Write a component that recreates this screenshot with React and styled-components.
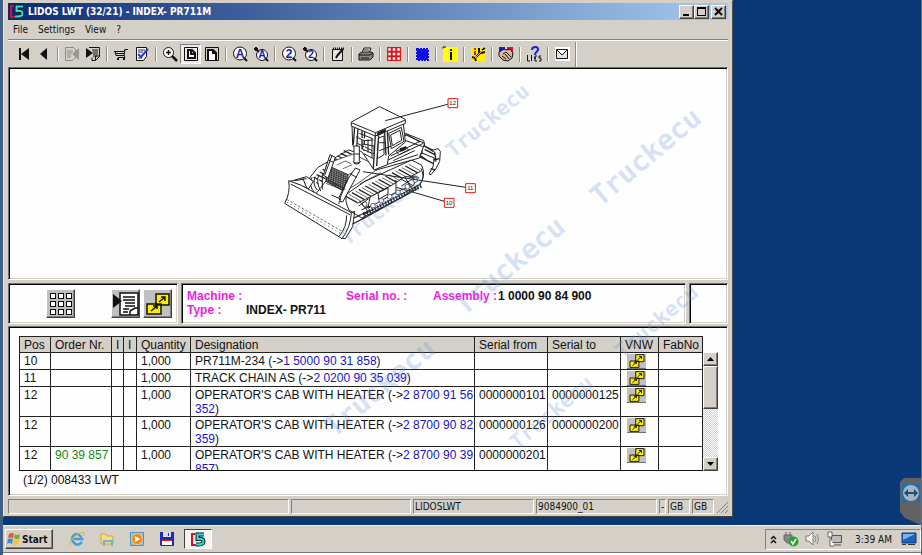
import { Fragment } from "react";
import styled, { createGlobalStyle, css } from "styled-components";

const face = "#d4d0c8";
const navy = "#0a3776";

const GlobalStyle = createGlobalStyle`
  * {
    box-sizing: border-box;
  }
  body {
    margin: 0;
    background: ${navy};
    font-family: "DejaVu Sans Condensed", "DejaVu Sans", sans-serif;
    font-size: 10px;
    color: #111;
  }
  button {
    font: inherit;
    color: inherit;
    padding: 0;
    margin: 0;
    border: 0;
    background: none;
  }
`;

const raised = css`
  border: 1px solid;
  border-color: #fff #404040 #404040 #fff;
  box-shadow: inset -1px -1px #808080;
  background: ${face};
`;

const sunken = css`
  border: 1px solid;
  border-color: #808080 #fff #fff #808080;
`;

const Screen = styled.div`
  position: relative;
  display: flex;
  flex-direction: column;
  min-height: 100vh;
  overflow: hidden;
  border-left: 3px solid #3e5f83;
  border-right: 1px solid #5b6e8a;
`;

const Desktop = styled.div`
  flex: 1;
  display: flex;
  padding: 0 188px 8px 0;
`;

const Window = styled.main`
  position: relative;
  flex: 1;
  min-width: 0;
  display: flex;
  flex-direction: column;
  padding: 2px 4px 2px 4px;
  background: ${face};
  border: 1px solid;
  border-color: ${face} #505050 #404040 #e8e6e0;
`;

const TitleBar = styled.header`
  display: flex;
  align-items: center;
  gap: 3px;
  height: 17px;
  padding: 0 2px 0 1px;
  background: linear-gradient(90deg, #0c2a72, #a6caf0);
  color: #fff;
`;

const Title = styled.h1`
  flex: 1;
  margin: 0;
  font-size: 10px;
  line-height: 16px;
  font-weight: bold;
`;

const WindowButtons = styled.div`
  display: flex;
`;

const WindowButton = styled.button`
  ${raised}
  width: 15px;
  height: 14px;
  display: grid;
  place-items: center;
  &:last-child {
    margin-left: 2px;
  }
`;

const MenuBar = styled.nav`
  display: flex;
  gap: 10px;
  height: 20px;
  padding: 2px 5px;
  border-bottom: 1px solid #808080;
`;

const MenuItem = styled.button`
  line-height: 14px;
`;

const ToolBar = styled.div`
  display: flex;
  align-items: center;
  height: 27px;
  padding-left: 4px;
  border-top: 1px solid #fff;
`;

const ToolButton = styled.button`
  width: 21px;
  height: 20px;
  display: grid;
  place-items: center;
  ${(p) => p.$pressed && css`
    ${sunken}
    background: #eceae6;
  `}
`;

const Divider = styled.span`
  width: 1px;
  height: ${(p) => (p.$tall ? "25px" : "15px")};
  margin: 0 3px;
  background: #8c8c88;
  box-shadow: 1px 0 #fff;
`;

const Panel = styled.section`
  background: #fefefe;
  border: 1px solid;
  border-color: #707070 #fff #fff #707070;
  box-shadow: inset 1px 1px #000, inset -1px -1px ${face};
`;

const Drawing = styled(Panel)`
  flex: 1;
  display: grid;
  place-items: center;
`;

const InfoRow = styled.div`
  display: flex;
  gap: 3px;
  padding: 3px 0 2px;
`;

const Actions = styled(Panel)`
  display: flex;
  align-items: center;
  gap: 3px;
  width: 170px;
  height: 41px;
  padding-left: 37px;
`;

const ActionButton = styled.button`
  ${raised}
  width: 29px;
  height: 29px;
  display: grid;
  place-items: center;
  background: #c0c0c0;
  &:first-child {
    margin-right: 33px;
  }
`;

const Machine = styled(Panel)`
  flex: 1;
  display: grid;
  grid-template-columns: 59px 100px 87px 65px 1fr;
  align-content: start;
  padding: 5px 5px 4px;
  font: bold 12px/14px "Liberation Sans", Arial, sans-serif;
`;

const Label = styled.span`
  color: #f01de0;
`;

const Spare = styled(Panel)`
  width: 39px;
`;

const Parts = styled(Panel)`
  padding: 9px 9px 8px 10px;
  font: 12px/14px "Liberation Sans", Arial, sans-serif;
`;

const TableArea = styled.div`
  display: flex;
`;

const TableClip = styled.div`
  flex: 1;
  height: 135px;
  overflow: hidden;
  border-bottom: 1px solid #111;
`;

const Table = styled.table`
  width: 100%;
  table-layout: fixed;
  border-collapse: collapse;
  th,
  td {
    border: 1px solid #222;
    padding: 1px 0 0 4px;
    text-align: left;
    vertical-align: top;
    font-weight: normal;
  }
  th {
    background: ${face};
    white-space: nowrap;
  }
`;

const Link = styled.a`
  color: #1414c8;
  text-decoration: none;
`;

const OrderNr = styled.span`
  color: #118a11;
`;

const LinkButton = styled.button`
  display: block;
  width: 19px;
  height: 15px;
  margin-left: 2px;
  background: #c0c0c0;
  border-bottom: 1px solid #707070;
`;

const ScrollBar = styled.div`
  display: flex;
  flex-direction: column;
  width: 15px;
  margin-top: 16px;
  background: repeating-conic-gradient(#fff 0 25%, ${face} 0 50%) 0 0 / 2px 2px;
`;

const ScrollButton = styled.button`
  ${raised}
  height: 14px;
  display: grid;
  place-items: center;
`;

const Thumb = styled.div`
  ${raised}
  height: 43px;
  margin-bottom: auto;
`;

const Caption = styled.p`
  margin: 2px 4px 0;
`;

const StatusBar = styled.footer`
  display: flex;
  gap: 2px;
  height: 18px;
  padding-top: 3px;
`;

const StatusCell = styled.span`
  ${sunken}
  flex: ${(p) => (p.$w ? `0 0 ${p.$w}px` : "1")};
  padding-left: 1px;
  line-height: 13px;
  white-space: nowrap;
`;

const TaskBar = styled.footer`
  display: flex;
  align-items: center;
  height: 30px;
  padding: 0 0 1px 2px;
  background: ${face};
  border-top: 1px solid #f4f4f4;
  border-bottom: 2px solid #fff;
  box-shadow: inset 0 -1px #777;
`;

const Start = styled.button`
  ${raised}
  display: flex;
  align-items: center;
  gap: 1px;
  width: 48px;
  height: 20px;
  padding-left: 1px;
  margin-right: 9px;
  font-size: 10px;
  font-weight: bold;
`;

const QuickButton = styled.button`
  width: 30px;
  height: 20px;
  display: grid;
  place-items: center;
  ${(p) => p.$active && css`
    border: 1px solid;
    border-color: #404040 #fff #fff #404040;
    width: 28px;
    margin-left: 2px;
    background: #f4f3f0;
  `}
`;

const Tray = styled.div`
  ${sunken}
  display: flex;
  align-items: center;
  gap: 6px;
  height: 21px;
  margin-left: auto;
  padding: 0 3px 0 4px;
`;

const Clock = styled.time`
  margin: 0 3px 0 6px;
`;

const RemoteTab = styled.button`
  position: absolute;
  right: 0;
  top: 478px;
  display: flex;
  align-items: flex-start;
  width: 21px;
  height: 47px;
  padding: 6px 0 0 2px;
  background: #626262;
  clip-path: polygon(0 4px, 4px 0, 100% 0, 100% 100%, 5px 40px, 0 34px);
`;

const Mark = styled.span`
  position: absolute;
  left: ${(p) => p.$x}px;
  top: ${(p) => p.$y}px;
  translate: -50% -50%;
  rotate: -40deg;
  color: rgba(95, 140, 225, 0.26);
  font: bold ${(p) => (p.$small ? 21 : 28)}px/1 "DejaVu Sans Mono", monospace;
  pointer-events: none;
`;

const Logo = () => (
  <svg width="16" height="15" viewBox="0 0 16 15" fill="none">
    <path d="M5 2H2v11h4" stroke="#d31225" strokeWidth="2" />
    <path d="M14 2.500H7.500V7q6-1 6 2.500T6 12.500" stroke="#022" strokeWidth="4" />
    <path d="M14 2.500H7.500V7q6-1 6 2.500T6 12.500" stroke="#36dcdc" strokeWidth="2" />
  </svg>
);

const Icon = ({ children, size = 16 }) => (
  <svg width={size} height={size} viewBox="0 0 16 16" fill="none" stroke="#111">
    {children}
  </svg>
);

const Lens = ({ char, small }) => (
  <Icon>
    <circle cx={small ? 9 : 8} cy={small ? 9 : 7.5} r={small ? 5.5 : 6.5} fill="#fff" />
    <path d="M12 12l3 3" strokeWidth="2" />
    {small && <path d="M1 3h4M3 1v4M3 3l3 3" strokeWidth="2" />}
    <text
      x={small ? 9 : 8}
      y="12"
      textAnchor="middle"
      fontFamily="Liberation Sans, sans-serif"
      fontWeight="bold"
      fontSize={small ? 10 : 12}
      fill="#1515bb"
      stroke="none"
    >
      {char}
    </text>
  </Icon>
);

const Swap = ({ width, height }) => (
  <svg width={width} height={height} viewBox="0 0 24 22" fill="#ffee00" stroke="#111" strokeWidth="1.500">
    <path d="M10 1h13v11H10zM1 11h14v10H1z" />
    <path d="M13 9l6-5M15 4h4v4M5 18l6-5M7 13h4v3" fill="none" />
  </svg>
);

const icons = {
  first: (
    <Icon>
      <path d="M5 2v12" strokeWidth="2" />
      <path d="M14 2v12L6 8z" fill="#111" stroke="none" />
    </Icon>
  ),
  prev: (
    <Icon>
      <path d="M11 2v12L4 8z" fill="#111" stroke="none" />
    </Icon>
  ),
  pageOff: (
    <Icon>
      <path d="M1.500 1.500h8l2 2v8l-3 3h-7zM3 5h6M3 7h5M3 9h4M3 11h4" stroke="#8a8a88" />
      <path d="M15 2v12L8 8z" fill="#999" stroke="none" />
    </Icon>
  ),
  pageOn: (
    <Icon>
      <path d="M4 1.500h10.500v9l-4 4H7v-3M7 4h6M8 6h5M8 8h5M8 10h4M10.500 14v-4h4" />
      <path d="M1 2v10l7-5z" fill="#111" stroke="none" />
    </Icon>
  ),
  cart: (
    <Icon>
      <path d="M1 5.500h10l1-2h3M2 5l1 4.500h8l1-6M3 7.500h8M11 9l1 2.500H5" />
      <path d="M4 13h2M10 13h2" strokeWidth="2" />
    </Icon>
  ),
  edit: (
    <Icon>
      <path d="M2.500 1.500h10v9l-3 4h-7z" fill="#fff" />
      <path d="M4 4h7M4 6h5M4 12h4" stroke="#225" />
      <path d="M4 8l3 3 7-8" stroke="#2438d0" strokeWidth="2" />
    </Icon>
  ),
  zoomIn: (
    <Icon>
      <circle cx="6.500" cy="6.500" r="5" fill="#fff" />
      <path d="M4 6.500h5M6.500 4v5" strokeWidth="1.500" />
      <path d="M10 10l5 5" strokeWidth="2.500" />
    </Icon>
  ),
  page: (
    <Icon>
      <path d="M1.500 1.500h13v13h-13z" />
      <path d="M5 4h4l3 3v5H5zM8 4v4h4" strokeWidth="2" fill="#fff" />
    </Icon>
  ),
  pageWide: (
    <Icon>
      <path d="M1.500 1.500h13v13h-13z" />
      <path d="M4 14V4h5l3 3v7M9 4v3h3" strokeWidth="2" fill="#fff" />
    </Icon>
  ),
  lensA: <Lens char="A" />,
  lensASmall: <Lens char="A" small />,
  lens2: <Lens char="2" />,
  lens2Small: <Lens char="2" small />,
  note: (
    <Icon>
      <path d="M2.500 3.500h10v11h-10z" fill="#e6e4e0" />
      <path d="M3 2.500h11" strokeWidth="2" strokeDasharray="1 1" />
      <path d="M7 10l6-7M6 12l1-2" strokeWidth="2" />
    </Icon>
  ),
  print: (
    <Icon>
      <path d="M4 7l2-5h7l-2 5" fill="#fff" />
      <path d="M1 8l3-2h9l2 1v4l-3 3H1z" fill="#888" />
      <path d="M1 9h11l3-2M3 12h8M6 4h5" />
    </Icon>
  ),
  redGrid: (
    <Icon>
      <path d="M1 1h14v14H1z" fill="#e11420" stroke="none" />
      <path d="M3 3h1v1H3zM7.500 3h1v1h-1zM12 3h1v1h-1zM3 7.500h1v1H3zM7.500 7.500h1v1h-1zM12 7.500h1v1h-1zM3 12h1v1H3zM7.500 12h1v1h-1zM12 12h1v1h-1z" stroke="#fff" strokeWidth="1.500" />
    </Icon>
  ),
  blueBox: (
    <Icon>
      <path d="M3 3h11v11H3z" fill="#0c0cf0" stroke="#0c0cf0" strokeWidth="2" strokeDasharray="2 1" />
    </Icon>
  ),
  info: (
    <Icon>
      <path d="M1 1h15v15H1z" fill="#ffff00" stroke="none" />
      <path d="M1 2.500V1h3" />
      <path d="M9 3v2M9 6v8" strokeWidth="2" />
    </Icon>
  ),
  tools: (
    <Icon>
      <path d="M1 1h15v15H1z" fill="#ffee00" stroke="none" />
      <path d="M5 2v2M5 5v4" stroke="#e02020" strokeWidth="2" />
      <path d="M2 11l3 1 1 3M6 11l5-5M9 2v4l2 1 4-1M15 2l-3 2" strokeWidth="2" />
      <path d="M5 12l7-7" stroke="#bbb" />
    </Icon>
  ),
  hands: (
    <Icon>
      <path d="M1 1h6v5H1z" fill="#1a1ae0" stroke="none" />
      <path d="M9 1h6v6H9z" fill="#d81828" stroke="none" />
      <path d="M1 6l5-3 3 1 3-1 3 4-1 5-4 3-5-1-4-4z" fill="#d8b89a" />
      <path d="M5 8l3-2 5 5M4 10l4 3M7 8l4 5" />
    </Icon>
  ),
  help: (
    <Icon>
      <path d="M6 4c0-4 7-4 6 0-1 2-3 2-3 5M9 11v2" stroke="#2020d0" strokeWidth="2" />
      <path d="M1.500 9v6H4M5.500 9v6M11 10h-2v5h2M15 10h-2v2h2v3h-2" />
    </Icon>
  ),
  mail: (
    <Icon>
      <path d="M1 1h15v14H1z" fill="#fff" stroke="none" />
      <path d="M2.500 3.500h11v9h-11zM3 4l5 5 5-5" fill="#e4e4e4" />
    </Icon>
  ),
};

const toolGroups = [
  ["first", "prev"],
  ["pageOff", "pageOn"],
  ["cart", "edit"],
  ["zoomIn", "page", "pageWide"],
  ["lensA", "lensASmall"],
  ["lens2", "lens2Small"],
  ["note"],
  ["print"],
  ["redGrid"],
  ["blueBox"],
  ["info"],
  ["tools"],
  ["hands"],
  ["help"],
  ["mail"],
];

const columns = [
  ["Pos", 31],
  ["Order Nr.", 61],
  ["I", 12],
  ["I", 13],
  ["Quantity", 54],
  ["Designation"],
  ["Serial from", 73],
  ["Serial to", 73],
  ["VNW", 38],
  ["FabNo", 44],
];

const rows = [
  { pos: 10, name: "PR711M-234", link: "1 5000 90 31 858" },
  { pos: 11, name: "TRACK CHAIN AS", link: "2 0200 90 35 039" },
  { pos: 12, name: "OPERATOR'S CAB WITH HEATER", link: "2 8700 91 56 352", from: "0000000101", to: "0000000125" },
  { pos: 12, name: "OPERATOR'S CAB WITH HEATER", link: "2 8700 90 82 359", from: "0000000126", to: "0000000200" },
  { pos: 12, order: "90 39 857", name: "OPERATOR'S CAB WITH HEATER", link: "2 8700 90 39 857", from: "0000000201" },
];

const marks = [
  [488, 121, true],
  [646, 157],
  [510, 266],
  [380, 388],
  [657, 322, true],
  [552, 413, true],
  [382, 209, true],
];

const callouts = [
  ["12", 554, 69, 352, 122],
  ["11", 607, 324, 285, 275],
  ["10", 543, 368, 385, 322],
];

const range = (n) => Array.from({ length: n }, (_, i) => i);

function Bulldozer() {
  return (
    <svg width="224" height="180" viewBox="-36 12 672 540" fill="#fff" stroke="#222" strokeWidth="3" strokeLinejoin="round">
      {/* ripper */}
      <path d="M412 160l55 22 4 18 25 10 14-4 7 8-2 30-10 20-16 20-6-2 12-22 4-26-60-24z" />
      <path d="M465 195l32 20M470 208l30 16M496 240l18-4M440 215l40 28M412 170l50 26v24l-40 16M445 225l50 25M500 215l4 30M488 266l14 4" strokeWidth="4" />
      {/* far track */}
      <path d="M150 262l92-52 30 10-80 60-55 70-16-18 5-40z" />
      {range(12).map((i) => (
        <path key={i} d={`M${128 + i * 9} ${300 - i * 8}l26 12`} strokeWidth="4" />
      ))}
      <path d="M132 292q-12 25 8 46M142 290q-10 24 6 40M152 285q-8 22 6 48M163 280v48" />
      {/* near track */}
      <path d="M236 342l55-38 140-64 30 16q14 30-6 58l-54 38-120 62-38-24q-14-28-7-48z" />
      {range(20).map((i) => (
        <path key={i} d={`M${232 + i * 10} ${348 - i * 5}l36 20`} strokeWidth={i % 2 ? 2 : 4} />
      ))}
      <path d="M268 370l190-96M285 405l170-92q18-20 4-48M290 384q30-24 60-30t55-42 48-18" fill="none" strokeWidth="3" />
      <path d="M300 385l90-52 46-16 10-22-34-6-36 24-70 38zM330 338l30-16v20l-28 16zM384 300v44" />
      {range(22).map((i) => (
        <path key={i} d={`M${292 + i * 8} ${408 - i * 4}l-5 -12`} strokeWidth="4" />
      ))}
      {[[290, 372], [315, 377], [340, 362], [365, 350], [390, 337], [418, 320], [442, 300]].map(([x, y]) => (
        <circle key={x} cx={x} cy={y} r="7" strokeWidth="2" />
      ))}
      <path d="M272 378l30-22M280 390l28-12M275 364l24 28M400 298l34 18M400 318l38-24M410 290l20 34" />
      {/* hood and engine */}
      <path d="M178 250l78-28 80 40-66 48-40 24-56-36z" stroke="#555" />
      <path d="M182 258l58 26-4 54-62-34z" fill="#999" />
      {range(9).map((i) => (
        <path key={i} d={`M${178 + i * 7} ${256 + i * 4}l-4 48M174 ${262 + i * 6}l62 24`} strokeWidth="2" />
      ))}
      <path d="M206 255l26-12 18 8M225 266l28-12M240 285l30-18M275 312l64-34" fill="none" strokeWidth="2" />
      {/* cab base */}
      <path d="M284 214l40 56 130-36 16-44-54-24-90 20z" />
      <path d="M318 270l8-14 60-28 80-38M330 262l120-38M368 228l88-44M376 242l64-30M408 180l56 20M415 162l40 24M384 214l30-12 8 8-28 14z" />
      <path d="M396 206l18-6v8l-16 6z" fill="#222" />
      {/* cab frame */}
      <path d="M252 134l70 30 84-34 6 56-50 42-4 26-40 16-34-52-30-22z" />
      <path d="M362 160l38-18 8 42-38 22zM368 165l28-14 5 30-28 16z" />
      <path d="M270 144l-4 60M282 150v58M290 154l-2 58M322 164l-6 102M332 166l-6 92M358 154l4 70M350 158l4 68M260 140l-4 54" strokeWidth="4" />
      <path d="M264 170l24 12 28-2M274 160l40 16M284 192l34 6v24l-34-14zM268 190l20 10M332 174l16-6v56l-20 12zM286 220l30 16M300 178v40M312 175v58M290 200l22 12M334 188h18M334 212l36-14" />
      <path d="M258 198h16v52q-8 5-16 0z" />
      <path d="M260 222h14M255 244q10 10 24 0" />
      <path d="M250 126l85-46 77 38v12l-90 38-72-30z" />
      <path d="M250 128l72 30 90-38M322 158v10" fill="none" />
      <path d="M328 159l24-11v8l-24 10z" fill="#222" />
      {/* blade */}
      <path d="M66 304l50-14 20 14-14 22zM80 302l36-6M104 294l14 34" />
      <path d="M62 302l38 14 150 82q-2 44-28 78L50 370q18-32 12-68z" />
      <path d="M250 398l10-4-6 46-22 36-10-1M68 312l178 92M236 406q0 36-22 62" fill="none" />
      <path d="M56 358l170 98" fill="none" strokeWidth="2" strokeDasharray="8 5" />
      <path d="M56 366l168 98" strokeWidth="2" strokeDasharray="4 9" />
      <path d="M254 432l38-20 160-88M258 414l50-24" fill="none" strokeWidth="4" />
      {/* lift arms */}
      <path d="M186 224l16 8-22 62-14-8zM262 264l14 6-52 96-16-4 34-68zM248 282l18 10" />
      <path d="M192 226l-22 60M180 300l52 28M190 345l28 12-6 14M238 300l-24 60M182 240l16 8" />
      {callouts.map(([label, x, y, tx, ty]) => (
        <g key={label}>
          <path d={`M${x} ${y}L${tx} ${ty}`} />
          <rect x={x - 14} y={y - 13} width="29" height="27" stroke="#e01818" />
          <text x={x} y={y + 6} textAnchor="middle" fontFamily="Liberation Sans, sans-serif" fontSize="18" fill="#111" stroke="none">
            {label}
          </text>
        </g>
      ))}
    </svg>
  );
}

function PartsTable() {
  return (
    <TableArea>
      <TableClip>
        <Table>
          <colgroup>
            {columns.map(([, width], i) => (
              <col key={i} width={width} />
            ))}
          </colgroup>
          <thead>
            <tr>
              {columns.map(([name], i) => (
                <th key={i}>{name}</th>
              ))}
            </tr>
          </thead>
          <tbody>
            {rows.map((row) => (
              <tr key={row.link}>
                <td>{row.pos}</td>
                <td>
                  <OrderNr>{row.order}</OrderNr>
                </td>
                <td />
                <td />
                <td>1,000</td>
                <td>
                  {row.name} (-&gt;<Link href="#part">{row.link}</Link>)
                </td>
                <td>{row.from}</td>
                <td>{row.to}</td>
                <td>
                  <LinkButton aria-label="VNW">
                    <Swap width={16} height={14} />
                  </LinkButton>
                </td>
                <td />
              </tr>
            ))}
          </tbody>
        </Table>
      </TableClip>
      <ScrollBar>
        <ScrollButton aria-label="Up">
          <svg width="7" height="4"><path d="M0 4h7L3.500 0z" /></svg>
        </ScrollButton>
        <Thumb />
        <ScrollButton aria-label="Down">
          <svg width="7" height="4"><path d="M0 0h7L3.500 4z" /></svg>
        </ScrollButton>
      </ScrollBar>
    </TableArea>
  );
}

function Taskbar() {
  return (
    <TaskBar>
      <Start>
        <svg width="14" height="14" viewBox="0 0 14 14">
          <path d="M2 2q3-2 5 0L6 6Q4 5 1 6z" fill="#e8582a" />
          <path d="M8 2q3 2 5 0l-1 5q-3 1-5-1z" fill="#6fb02c" />
          <path d="M1 7q3-1 5 0l-1 5q-3-2-5 0z" fill="#3a86d8" />
          <path d="M7 7q3 2 5 1l-1 4q-3 2-5 0z" fill="#f6c22c" />
        </svg>
        Start
      </Start>
      <QuickButton aria-label="Browser">
        <Icon>
          <path d="M13 11q-4 5-8 1t0-8q5-3 8 4H5" stroke="#3f9ede" strokeWidth="2.500" />
          <path d="M2 14q-3-1 2-7 7-7 11-5 1 1-1 3" stroke="#e0b33c" />
        </Icon>
      </QuickButton>
      <QuickButton aria-label="Explorer">
        <Icon>
          <path d="M2 3h5l1 2h6v8H2z" fill="#f5dc82" stroke="#cda84a" />
          <path d="M5 15v-5h8v5M4 10h10" stroke="#6eb4de" strokeWidth="2" />
        </Icon>
      </QuickButton>
      <QuickButton aria-label="Media player">
        <Icon>
          <path d="M1.500 1.500h13v13h-13z" fill="#8fc3e8" stroke="#4d93c8" />
          <circle cx="8" cy="8" r="5.500" fill="#f08a1c" stroke="#f7c58a" />
          <path d="M6 5v6l5-3z" fill="#fff" stroke="none" />
        </Icon>
      </QuickButton>
      <QuickButton aria-label="Save">
        <Icon>
          <path d="M1 1h14v14H2l-1-1z" fill="#1a2fae" stroke="none" />
          <path d="M4 1h8v5H4z" fill="#dde" stroke="none" />
          <path d="M3 9h10v5H3z" fill="#fff" stroke="none" />
          <path d="M3 9.500h10" stroke="#d22" />
          <path d="M9.500 2v3" stroke="#1a2fae" />
        </Icon>
      </QuickButton>
      <QuickButton aria-label="LIDOS LWT" $active>
        <Logo />
      </QuickButton>
      <Tray>
        <svg width="7" height="9" fill="none" stroke="#111" strokeWidth="1.500">
          <path d="M1 4l2.500-2.500L6 4M1 8l2.500-2.500L6 8" />
        </svg>
        <Icon>
          <path d="M3 1v3M7 1v3M1 4h8v5l-2 3H4L1 9z" fill="#888" stroke="#666" />
          <circle cx="10.500" cy="10.500" r="5" fill="#28a02c" stroke="none" />
          <path d="M8 10l2 3 3-5" stroke="#fff" strokeWidth="1.500" />
        </Icon>
        <Icon>
          <path d="M1 5h3l4-4v13l-4-4H1z" fill="#fff" stroke="#777" />
          <path d="M10 5q2 3 0 6M12 3q3 5 0 10" stroke="#888" />
        </Icon>
        <Icon>
          <path d="M4.500 4.500h10v7h-10zM7 14h7" fill="#bbb" stroke="#555" />
          <path d="M1 1h4v5H1zM3 6v9h4" fill="#fff" stroke="#666" />
        </Icon>
        <Clock>3:39 AM</Clock>
        <Icon>
          <path d="M1 2h14v10H1z" fill="#1e5fc0" stroke="#15396e" />
          <path d="M2 3h12L2 9z" fill="#78b4ec" stroke="none" />
          <path d="M1 13.500h4M7 13.500h7" stroke="#333" />
        </Icon>
      </Tray>
    </TaskBar>
  );
}

export default function App() {
  return (
    <Screen>
      <GlobalStyle />
      <Desktop>
        <Window>
          <TitleBar>
            <Logo />
            <Title>LIDOS LWT (32/21) - INDEX- PR711M</Title>
            <WindowButtons>
              <WindowButton aria-label="Minimize">
                <svg width="9" height="9"><path d="M1 7h6v2H1z" /></svg>
              </WindowButton>
              <WindowButton aria-label="Maximize">
                <svg width="9" height="9"><path d="M0 0h9v9H0zM1 2v6h7V2z" fillRule="evenodd" /></svg>
              </WindowButton>
              <WindowButton aria-label="Close">
                <svg width="9" height="9"><path d="M1 1l7 7M8 1L1 8" stroke="#000" strokeWidth="2" /></svg>
              </WindowButton>
            </WindowButtons>
          </TitleBar>
          <MenuBar>
            {["File", "Settings", "View", "?"].map((item) => (
              <MenuItem key={item}>{item}</MenuItem>
            ))}
          </MenuBar>
          <ToolBar>
            {toolGroups.map((group, i) => (
              <Fragment key={i}>
                {i > 0 && <Divider />}
                {group.map((name) => (
                  <ToolButton key={name} aria-label={name} $pressed={name === "page"}>
                    {icons[name]}
                  </ToolButton>
                ))}
              </Fragment>
            ))}
            <Divider $tall />
          </ToolBar>
          <Drawing>
            <Bulldozer />
          </Drawing>
          <InfoRow>
            <Actions>
              <ActionButton aria-label="Overview">
                <svg width="24" height="24" fill="#fff" stroke="#111">
                  {range(9).map((i) => (
                    <rect key={i} x={1.5 + (i % 3) * 8} y={1.5 + Math.floor(i / 3) * 8} width="5" height="5" />
                  ))}
                </svg>
              </ActionButton>
              <ActionButton aria-label="Parts list">
                <svg width="26" height="24" fill="none" stroke="#111" strokeWidth="1.500">
                  <path d="M7 1h18v22H7z" fill="#fff" />
                  <path d="M10 5h12M10 8h12M12 11h10M12 14h10M10 17h6M10 20h5M17 23v-4l5-3h3" />
                  <path d="M0 2v14l9-7z" fill="#111" stroke="none" />
                </svg>
              </ActionButton>
              <ActionButton aria-label="Where used">
                <Swap width={24} height={24} />
              </ActionButton>
            </Actions>
            <Machine>
              <Label>Machine :</Label>
              <span />
              <Label>Serial no. :</Label>
              <Label>Assembly :</Label>
              <span>1 0000 90 84 900</span>
              <Label>Type :</Label>
              <span>INDEX- PR711</span>
            </Machine>
            <Spare />
          </InfoRow>
          <Parts>
            <PartsTable />
            <Caption>(1/2) 008433 LWT</Caption>
          </Parts>
          <StatusBar>
            <StatusCell />
            <StatusCell $w={120} />
            <StatusCell $w={121}>LIDOSLWT</StatusCell>
            <StatusCell $w={121}>9084900_01</StatusCell>
            <StatusCell $w={7}>-</StatusCell>
            <StatusCell $w={22}>GB</StatusCell>
            <StatusCell $w={22}>GB</StatusCell>
            <svg width="12" height="15" stroke="#808080">
              <path d="M1 14L12 3M5 14l7-7M9 14l3-3" />
            </svg>
          </StatusBar>
        </Window>
      </Desktop>
      <Taskbar />
      {marks.map(([x, y, small]) => (
        <Mark key={`${x}-${y}`} $x={x - 3} $y={y} $small={small}>
          Truckecu
        </Mark>
      ))}
      <RemoteTab aria-label="Remote session">
        <svg width="18" height="18" viewBox="0 0 18 18">
          <path d="M0 0h18v18H0z" fill="#1b6fb0" />
          <circle cx="9" cy="9" r="8" fill="#aab4bc" />
          <path d="M2 9l4-4v3h6V5l4 4-4 4v-3H6v3z" fill="#1a4e80" />
        </svg>
      </RemoteTab>
    </Screen>
  );
}
